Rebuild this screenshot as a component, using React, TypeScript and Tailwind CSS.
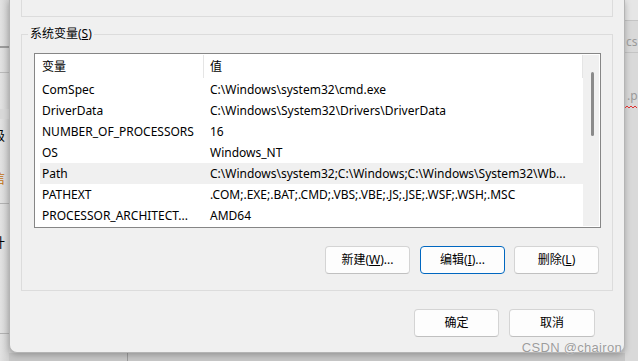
import React from 'react';

const rows = [
    { name: 'ComSpec', value: 'C:\\Windows\\system32\\cmd.exe' },
    { name: 'DriverData', value: 'C:\\Windows\\System32\\Drivers\\DriverData' },
    { name: 'NUMBER_OF_PROCESSORS', value: '16' },
    { name: 'OS', value: 'Windows_NT' },
    { name: 'Path', value: 'C:\\Windows\\system32;C:\\Windows;C:\\Windows\\System32\\Wb...', selected: true },
    { name: 'PATHEXT', value: '.COM;.EXE;.BAT;.CMD;.VBS;.VBE;.JS;.JSE;.WSF;.WSH;.MSC' },
    { name: 'PROCESSOR_ARCHITECT...', value: 'AMD64' },
];

const font = { fontFamily: '"Segoe UI", "Noto Sans", "Noto Sans CJK SC", sans-serif' };

function Btn(props: { children: React.ReactNode, focused?: boolean, className?: string }) {
    return (
        <button
            className={
                'flex h-[28px] items-center justify-center rounded-[4px] bg-[#fdfdfd] text-[12px] text-black ' +
                (props.focused
                    ? 'border border-[#0067c0] '
                    : 'border border-[#d4d4d4] border-b-[#c0c0c0] ') +
                (props.className || '')
            }
        >
            {props.children}
        </button>
    );
}

function App() {
    return (
        <div
            className="flex h-[361px] w-[638px] overflow-hidden bg-[#d4d4d4]"
            style={font}
        >
            {/* left desktop strip, the window behind is cut off here */}
            <div className="flex h-full w-[9px] flex-col overflow-hidden bg-gradient-to-r from-[#e2e2e2] to-[#cfcfcf]">
                <div className="h-[46px]" />
                <div className="h-[2px] bg-[#9a9a9a]" />
                <div className="h-[24px]" />
                <div className="h-px bg-[#b8b8b8]" />
                <div className="h-[36px]" />
                <div className="h-[10px] bg-[#d8d8d8]" />
                <div className="relative h-[84px]">
                    <span className="absolute left-[-8px] top-[7px] text-[13px] text-black">级</span>
                    <span className="absolute left-[-8px] top-[50px] text-[13px] text-[#c07010]">信</span>
                </div>
                <div className="h-px bg-[#b0b0b0]" />
                <div className="relative h-[129px]">
                    <span className="absolute left-[-8px] top-[29px] text-[13px] text-black">计</span>
                </div>
                <div className="h-px bg-[#b0b0b0]" />
            </div>

            {/* dialog + what lies below it */}
            <div className="flex w-[616px] flex-col">
                <div className="relative flex h-[353px] flex-col rounded-b-[8px] border-x border-b border-[#b4b4b4] bg-[#f0f0f0] shadow-[0_2px_6px_rgba(0,0,0,0.25)]">
                    {/* bottom of previous group box */}
                    <div className="ml-[11px] h-[17px] w-[592px] border-x border-b border-[#dcdcdc]" />

                    {/* system variables group */}
                    <div className="relative ml-[11px] mt-[17px] flex h-[257px] w-[592px] flex-col border border-[#dcdcdc] px-[12px] pt-[18px]">
                        <span className="absolute left-[6px] top-[-9px] bg-[#f0f0f0] px-[2px] text-[12px] leading-[16px] text-black">
                            系统变量(<span className="underline">S</span>)
                        </span>

                        <div className="flex h-[175px] w-[567px] border border-[#868686] bg-white">
                            <div className="flex flex-1 flex-col">
                                <div className="flex h-[25px] items-center pl-[5px] text-[12px] text-black">
                                    <div className="relative flex h-full w-[168px] items-center pl-[2px]">
                                        变量
                                        <div className="absolute right-[4px] top-[1px] h-[23px] w-px bg-[#e5e5e5]" />
                                    </div>
                                    <div className="relative flex h-full flex-1 items-center pl-[2px]">
                                        值
                                        <div className="absolute right-0 top-[1px] h-[23px] w-px bg-[#e5e5e5]" />
                                    </div>
                                </div>
                                {rows.map((r) => (
                                    <div
                                        key={r.name}
                                        className={
                                            'ml-[5px] flex h-[21px] items-center text-[12px] text-black ' +
                                            (r.selected ? 'bg-[#f0f0f0]' : '')
                                        }
                                    >
                                        <div className="w-[168px] overflow-hidden whitespace-nowrap pl-[2px]">{r.name}</div>
                                        <div className="flex-1 overflow-hidden whitespace-nowrap pl-[2px]">{r.value}</div>
                                    </div>
                                ))}
                            </div>
                            {/* scrollbar */}
                            <div className="my-px mr-px flex w-[16px] justify-center bg-[#f0f0f0] pt-[17px]">
                                <div className="ml-[2px] h-[64px] w-[3px] rounded-full bg-[#8a8a8a]" />
                            </div>
                        </div>

                        <div className="mt-[18px] flex justify-end pr-[1px]">
                            <Btn className="w-[85px]">新建(<span className="underline">W</span>)...</Btn>
                            <Btn focused className="ml-[10px] w-[85px]">编辑(<span className="underline">I</span>)...</Btn>
                            <Btn className="ml-[9px] w-[85px]">删除(<span className="underline">L</span>)</Btn>
                        </div>
                    </div>

                    <div className="mr-[29px] mt-[18px] flex justify-end gap-[10px]">
                        <Btn className="w-[85px]">确定</Btn>
                        <Btn className="w-[86px]">取消</Btn>
                    </div>

                    <span
                        className="absolute bottom-[-5px] right-[2px] text-[13px] tracking-[0.3px] text-[#9c9c9c]"
                        style={{ fontFamily: '"Liberation Sans", Arial, sans-serif', textShadow: '0 0 1px #ffffff' }}
                    >
                        CSDN @chairon
                    </span>
                </div>
                <div className="flex flex-1 bg-[#c6c6c6]">
                    <div className="w-[118px]" />
                    <div className="w-px bg-[#9c9c9c]" />
                </div>
            </div>

            {/* right desktop strip */}
            <div className="flex flex-1 flex-col overflow-hidden bg-[#d9d9d9]">
                <div className="h-[20px] bg-[#e6e6e6]" />
                <div className="h-px bg-[#c4c4c4]" />
                <div className="relative h-[31px]">
                    <span className="absolute left-[1px] top-[12px] text-[12px] text-[#999]">cs</span>
                </div>
                <div className="h-px bg-[#c4c4c4]" />
                <div className="relative h-[60px]">
                    <span className="absolute left-[2px] top-[34px] text-[12px] text-[#999]">.p</span>
                    <svg className="absolute left-0 top-[52px]" width="13" height="4" viewBox="0 0 13 4">
                        <path d="M0 3 L2 1 L4 3 L6 1 L8 3 L10 1 L12 3" fill="none" stroke="#e03030" strokeWidth="1" />
                    </svg>
                </div>
            </div>
        </div>
    );
}

export default App;
